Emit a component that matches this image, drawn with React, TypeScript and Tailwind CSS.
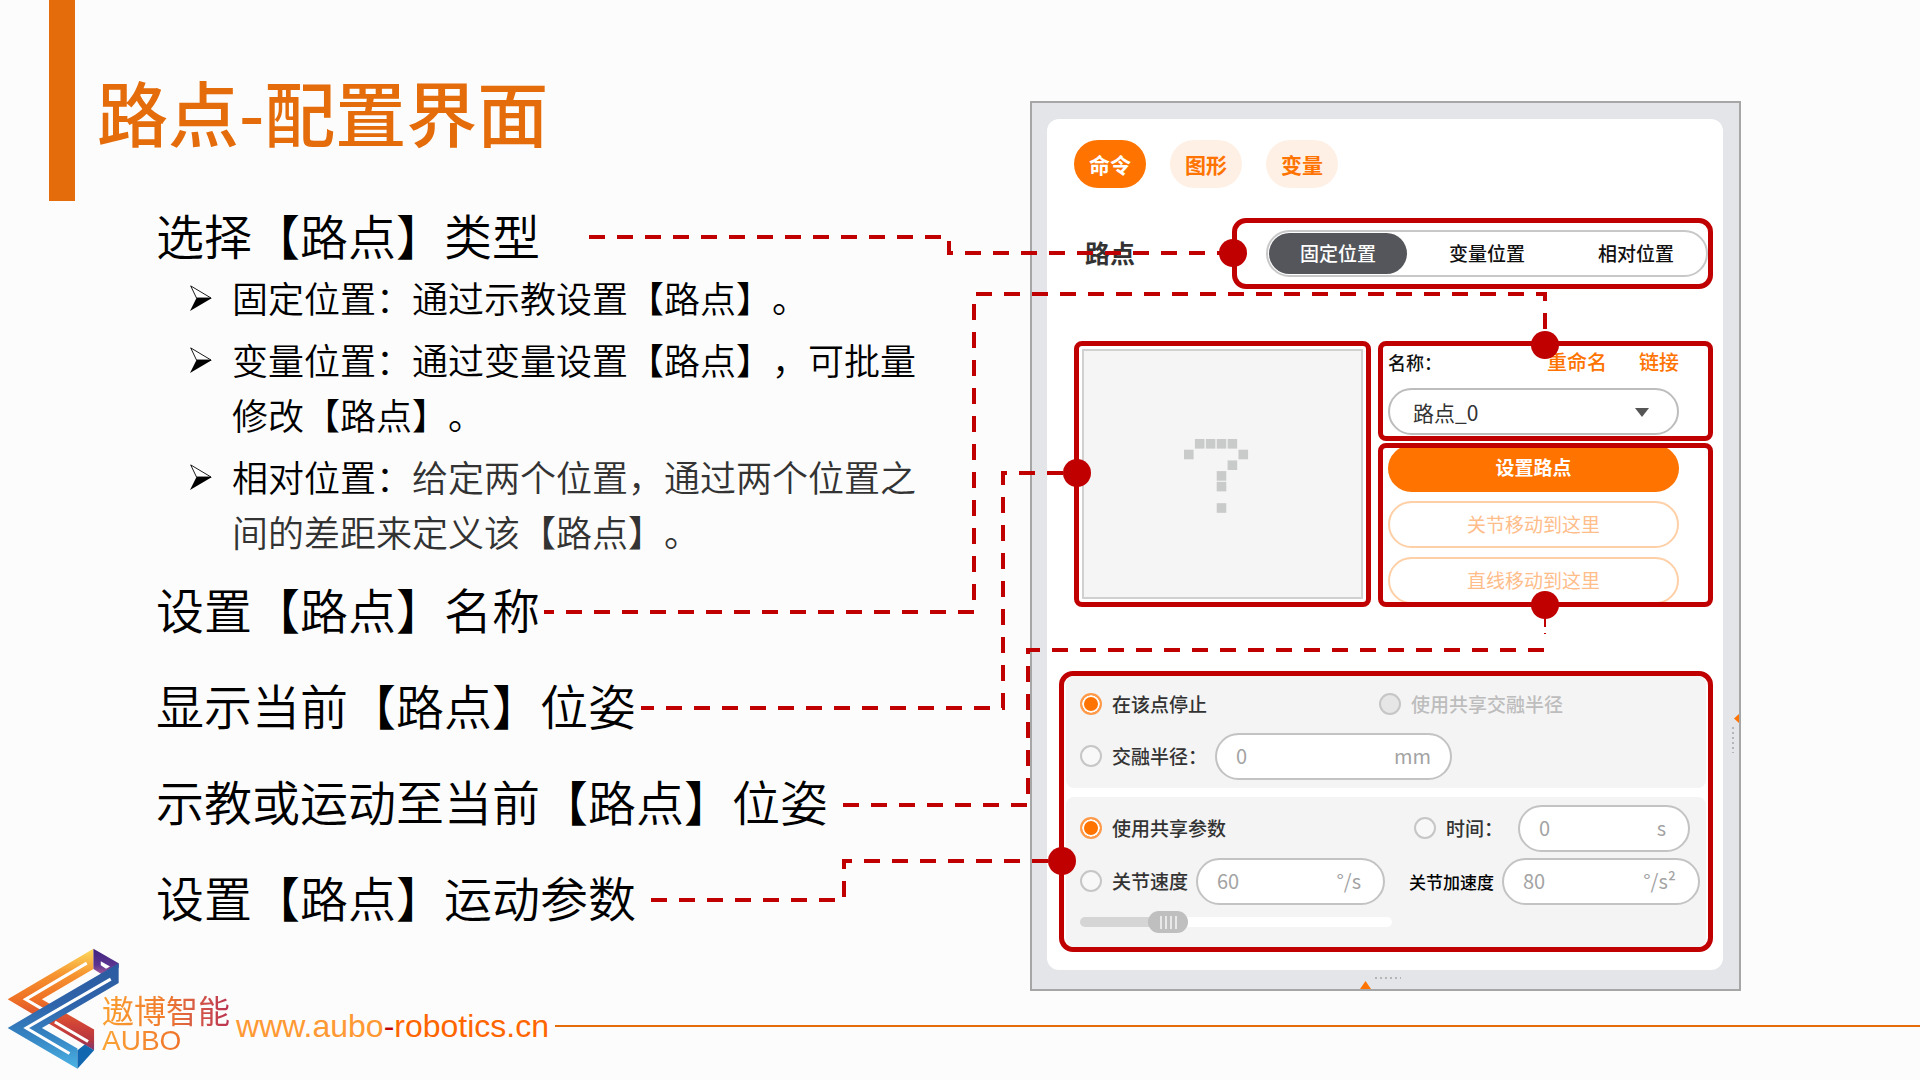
import React, { useState } from "react";

const RED = "#c00000";

function ArrowBullet() {
  return (
    <svg viewBox="0 0 22 26" className="mt-[15px] h-[26px] w-[22px] shrink-0" aria-hidden="true">
      <path d="M0.7 0.9 L21 13 L6.5 13 Z" fill="#fff" stroke="#000" strokeWidth="0.9" />
      <path d="M6.5 13 L22 13 L0 26 Z" fill="#000" />
    </svg>
  );
}

function SubItem({ children }: { children: React.ReactNode }) {
  return (
    <li className="flex gap-5 text-4xl leading-[55px]">
      <ArrowBullet />
      <p className="min-w-0 flex-1">{children}</p>
    </li>
  );
}

function AuboLogo() {
  return (
    <svg viewBox="20 53 340 366" className="h-[122px] w-[113px] shrink-0" aria-hidden="true">
      <defs>
        <linearGradient id="warm" gradientUnits="userSpaceOnUse" x1="270" y1="60" x2="270" y2="360">
          <stop offset="0" stopColor="#fbd65a" />
          <stop offset="0.25" stopColor="#f6922f" />
          <stop offset="0.5" stopColor="#ee6f25" />
          <stop offset="0.75" stopColor="#cf4238" />
          <stop offset="0.9" stopColor="#b5373f" />
          <stop offset="1" stopColor="#7a3a78" />
        </linearGradient>
        <linearGradient id="cool" gradientUnits="userSpaceOnUse" x1="200" y1="100" x2="200" y2="416">
          <stop offset="0" stopColor="#2b5a9f" />
          <stop offset="0.4" stopColor="#3065ab" />
          <stop offset="0.7" stopColor="#3585c3" />
          <stop offset="1" stopColor="#4cb4e4" />
        </linearGradient>
        <linearGradient id="violet" x1="0" y1="0" x2="0" y2="1">
          <stop offset="0" stopColor="#3f2380" />
          <stop offset="0.6" stopColor="#5b3590" />
          <stop offset="1" stopColor="#b0609a" />
        </linearGradient>
      </defs>
      <path d="M280 55 L22 207 L282 360 L282 298 L125 207 L280 116 Z" fill="url(#warm)" />
      <path d="M260 98 L76 207 L160 256" fill="none" stroke="#fff" strokeWidth="9" />
      <path d="M164 275 L264 334" fill="none" stroke="#fff" strokeWidth="9" />
      <path d="M280 55 L356 98 L356 112 L312 136 L280 116 Z" fill="url(#violet)" />
      <path d="M302 92 L330 108 L318 115 L302 104 Z" fill="#fff" />
      <path d="M356 98 L22 293 L232 416 L232 355 L125 293 L356 158 Z" fill="url(#cool)" />
      <path d="M332 146 L78 293 L208 370" fill="none" stroke="#fff" strokeWidth="9" />
      <path d="M232 360 L254 343 L282 360 L232 416 Z" fill="#1268b0" />
    </svg>
  );
}

function Connectors() {
  return (
    <svg
      width="1920"
      height="1080"
      viewBox="0 0 1920 1080"
      className="pointer-events-none absolute top-0 left-0 max-w-none"
      aria-hidden="true"
    >
      <g fill="none" stroke={RED} strokeWidth="4" strokeDasharray="16 12">
        <path d="M589 237 H949 V253 H1232" />
        <path d="M544 612 H974 V294 H1545 V345" strokeDashoffset="6" />
        <path d="M641 708 H1003 V473 H1077" strokeDashoffset="3" />
        <path d="M843 805 H1028 V650 H1545" />
        <path d="M651 900 H844 V861 H1062" />
      </g>
      <path d="M1545 605 V627 M1545 633 V634" stroke={RED} strokeWidth="2" />
      <g fill={RED}>
        <circle cx="1233" cy="253" r="14" />
        <circle cx="1545" cy="345" r="14" />
        <circle cx="1077" cy="473" r="14" />
        <circle cx="1545" cy="605" r="14" />
        <circle cx="1062" cy="861" r="14" />
      </g>
    </svg>
  );
}

const PIXELS = [
  [1, 0], [2, 0], [3, 0], [4, 0],
  [0, 1], [5, 1],
  [4, 2],
  [3, 3],
  [3, 4],
  [3, 6],
];

function QuestionMark() {
  return (
    <svg viewBox="0 0 65 75" className="h-[75px] w-[65px]" aria-label="?">
      {PIXELS.map(([c, r]) => (
        <rect key={c + "-" + r} x={c * 10.9} y={r * 10.7} width="9.6" height="9.6" fill="#c9caca" />
      ))}
    </svg>
  );
}

function Radio({ name, label, defaultChecked, disabled, className = "" }: {
  name: string; label: string; defaultChecked?: boolean; disabled?: boolean; className?: string;
}) {
  return (
    <label className={"flex shrink-0 items-center gap-[10px] font-medium " + (disabled ? "text-[#bdbdbd] " : "text-[#333] ") + className}>
      <input
        type="radio"
        name={name}
        defaultChecked={defaultChecked}
        disabled={disabled}
        className="size-[22px] shrink-0 appearance-none rounded-full border-2 border-[#c6c6c6] bg-[#f8f8f8] checked:border-[#ff9a4a] checked:bg-[#ff7300] checked:shadow-[inset_0_0_0_2px_white] disabled:bg-[#e6e6e6]"
      />
      {label}
    </label>
  );
}

function Field({ label, value, unit, className }: { label: string; value: string; unit: string; className: string }) {
  return (
    <div className={"flex h-[47px] shrink-0 items-center rounded-full border-2 border-[#c3c3c3] bg-white pb-0.5 pl-[19px] text-xl text-[#a3a3a3] " + className}>
      <input type="text" aria-label={label} defaultValue={value} className="w-0 min-w-0 flex-1 bg-transparent outline-none" />
      <span>{unit}</span>
    </div>
  );
}

const TABS = ["命令", "图形", "变量"];
const KINDS = ["固定位置", "变量位置", "相对位置"];

function WaypointPanel() {
  const [tab, setTab] = useState(0);
  const [kind, setKind] = useState(0);
  return (
    <aside className="relative mt-[101px] mr-[179px] min-w-0 flex-1 border-2 border-[#a6a6a6] bg-[#e3e5e8] pt-4 pr-4 pb-[19px] pl-[15px]">
      <div className="rounded-xl bg-white pt-[21px] pr-[10px] pb-[18px] pl-3 text-[19px] leading-6">
        <nav className="flex gap-6 pl-[15px]">
          {TABS.map((t, i) => (
            <button
              key={t}
              onClick={() => setTab(i)}
              className={
                "h-12 w-[72px] rounded-full text-[21px] font-bold " +
                (i === tab ? "bg-[#ff7300] text-white" : "bg-[#fff0e5] text-[#ff7300]")
              }
            >
              {t}
            </button>
          ))}
        </nav>

        <div className="mt-[30px] flex items-center justify-between pl-[26px]">
          <h2 className="pb-1 text-[25px] font-bold text-[#333]">路点</h2>
          <div className="rounded-[14px] border-5 border-[#c00000] py-[7px] pl-[29px]">
            <div className="flex h-[47px] w-[442px] justify-between rounded-full border-2 border-[#c8c8c8] p-px">
              {KINDS.map((k, i) => (
                <button
                  key={k}
                  onClick={() => setKind(i)}
                  className={
                    "w-[138px] rounded-full pb-0.5 font-medium " +
                    (i === kind ? "bg-[#54565b] text-white" : "text-[#111]")
                  }
                >
                  {k}
                </button>
              ))}
            </div>
          </div>
        </div>

        <div className="mt-[52px] flex gap-[7px] pl-[15px]">
          <div className="flex h-[266px] w-[297px] shrink-0 rounded-lg border-5 border-[#c00000] p-[3px]">
            <div className="flex flex-1 items-center justify-center border-2 border-[#d0d0d0] bg-[#f5f5f5] pt-1 pr-3">
              <QuestionMark />
            </div>
          </div>
          <div className="flex min-w-0 flex-1 flex-col gap-[2px]">
            <div className="h-[100px] rounded-lg border-5 border-[#c00000] pr-[29px] pl-[5px]">
              <div className="flex h-[42px] items-center pb-2.5">
                <label htmlFor="waypoint-name" className="mr-auto text-lg font-medium text-[#111]">名称：</label>
                <div className="flex gap-8 text-xl font-medium text-[#ff7300]">
                  <button>重命名</button>
                  <button>链接</button>
                </div>
              </div>
              <div className="relative">
                <select
                  id="waypoint-name"
                  className="h-[47px] w-full appearance-none rounded-full border-2 border-[#bdbdbd] bg-white pl-[23px] text-[21px] leading-8 text-[#333]"
                >
                  <option>路点_0</option>
                </select>
                <svg viewBox="0 0 14 9" className="pointer-events-none absolute top-[20px] right-[30px] h-[9px] w-[14px]" aria-hidden="true">
                  <path d="M0 0 H14 L7 9 Z" fill="#555" />
                </svg>
              </div>
            </div>
            <div className="flex h-[164px] flex-col justify-center gap-[9px] overflow-hidden rounded-lg border-5 border-[#c00000] pr-[29px] pb-0.5 pl-[5px]">
              <button className="h-[47px] shrink-0 rounded-full bg-[#ff7300] pb-0.5 font-bold text-white">设置路点</button>
              <button className="h-[47px] shrink-0 rounded-full border-2 border-[#ffcfa6] text-[#ffbd8a]">关节移动到这里</button>
              <button className="h-[47px] shrink-0 rounded-full border-2 border-[#ffcfa6] text-[#ffbd8a]">直线移动到这里</button>
            </div>
          </div>
        </div>

        <div className="mt-16 flex h-[281px] flex-col gap-[9px] rounded-[14px] border-5 border-[#c00000] px-[2px]">
          <div className="flex flex-col gap-[9px] rounded-lg bg-[#f4f4f4] py-2 pl-[14px]">
            <div className="flex h-10 items-center">
              <Radio name="blend" label="在该点停止" defaultChecked className="w-[299px]" />
              <Radio name="blend" label="使用共享交融半径" disabled />
            </div>
            <div className="flex items-center gap-2">
              <Radio name="blend" label="交融半径：" className="pb-0.5" />
              <Field label="交融半径" value="0" unit="mm" className="w-[237px] pr-[19px]" />
            </div>
          </div>
          <div className="flex flex-1 flex-col gap-[6px] rounded-lg bg-[#f4f4f4] pt-2 pl-[14px]">
            <div className="flex items-center">
              <Radio name="motion" label="使用共享参数" defaultChecked className="w-[334px] pb-0.5" />
              <Radio name="motion" label="时间：" className="mr-[15px] pb-0.5" />
              <Field label="时间" value="0" unit="s" className="w-[172px] pr-[22px]" />
            </div>
            <div className="flex items-center">
              <Radio name="motion" label="关节速度" className="mr-2 pb-0.5" />
              <Field label="关节速度" value="60" unit="°/s" className="w-[189px] pr-[22px]" />
              <span className="mr-2 ml-6 shrink-0 text-[17px] font-medium text-black">关节加速度</span>
              <Field label="关节加速度" value="80" unit="°/s²" className="w-[198px] pr-[22px]" />
            </div>
            <input
              type="range"
              aria-label="关节速度"
              defaultValue={25}
              className="h-[22px] w-[312px] appearance-none bg-transparent [&::-webkit-slider-runnable-track]:h-[10px] [&::-webkit-slider-runnable-track]:rounded-full [&::-webkit-slider-runnable-track]:bg-[linear-gradient(to_right,#d5d5d5_28%,#ffffff_28%)] [&::-webkit-slider-thumb]:mt-[-6px] [&::-webkit-slider-thumb]:h-[22px] [&::-webkit-slider-thumb]:w-[40px] [&::-webkit-slider-thumb]:appearance-none [&::-webkit-slider-thumb]:rounded-full [&::-webkit-slider-thumb]:bg-[#bfbfbf] [&::-webkit-slider-thumb]:bg-[repeating-linear-gradient(to_right,#e8e8e8_0_2px,transparent_2px_5px)] [&::-webkit-slider-thumb]:bg-[length:17px_13px] [&::-webkit-slider-thumb]:bg-center [&::-webkit-slider-thumb]:bg-no-repeat"
            />
          </div>
        </div>
      </div>

      <svg viewBox="0 0 42 14" className="absolute right-[337px] bottom-0 h-[14px] w-[42px]" aria-hidden="true">
        <path d="M0 14 L5.5 6 L11 14 Z" fill="#ff7300" />
        <path d="M15 3 H41" stroke="#b5b5b5" strokeWidth="2" strokeDasharray="2 3" />
      </svg>
      <svg viewBox="0 0 8 40" className="absolute right-0 bottom-[235px] h-[40px] w-[8px]" aria-hidden="true">
        <path d="M8 0 L3 4.5 L8 9 Z" fill="#ff7300" />
        <path d="M2 13 V39" stroke="#b5b5b5" strokeWidth="2" strokeDasharray="2 3" />
      </svg>
    </aside>
  );
}

export default function App() {
  return (
    <div className="relative min-h-screen overflow-hidden bg-[#fcfcfc] font-['Noto_Sans_CJK_SC',sans-serif] text-black [text-spacing-trim:space-all]">
      <div className="flex">
        <section className="w-[1030px] shrink-0">
          <header className="flex h-[198px] items-start gap-[22px] pl-[49px]">
            <div className="h-[201px] w-[26px] shrink-0 bg-[#e46c0a]" />
            <h1 className="pt-[60px] text-[71px] leading-[100px] font-medium text-[#e46c0a]">路点-配置界面</h1>
          </header>
          <div className="w-[922px] pl-[156px] text-5xl leading-[72px] font-[350]">
            <p>选择【路点】类型</p>
            <ul className="flex flex-col gap-[7px] pl-[34px]">
              <SubItem>固定位置：通过示教设置【路点】。</SubItem>
              <SubItem>变量位置：通过变量设置【路点】，可批量修改【路点】。</SubItem>
              <SubItem>
                相对位置：
                <span className="text-[#333]">给定两个位置，通过两个位置之间的差距来定义该【路点】。</span>
              </SubItem>
            </ul>
            <div className="mt-[13px] flex flex-col gap-6">
              <p>设置【路点】名称</p>
              <p>显示当前【路点】位姿</p>
              <p>示教或运动至当前【路点】位姿</p>
              <p>设置【路点】运动参数</p>
            </div>
          </div>
        </section>
        <WaypointPanel />
      </div>

      <footer className="-mt-[43px] flex h-[132px] pl-[7px]">
        <AuboLogo />
        <div className="-ml-[18px] shrink-0 pt-[43px]">
          <p className="bg-gradient-to-r from-[#fba02f] via-[#f07a2c] to-[#b93050] bg-clip-text text-[32px] leading-[36px] font-normal text-transparent">
            遨博智能
          </p>
          <p className="w-[84px] bg-gradient-to-r from-[#fba535] to-[#ee6f2a] bg-clip-text font-['Liberation_Sans',sans-serif] text-[28px] leading-[28px] text-transparent">
            AUBO
          </p>
        </div>
        <a
          href="http://www.aubo-robotics.cn"
          className="ml-[6px] pt-[60px] font-['Liberation_Sans',sans-serif] text-[32px] leading-9 text-[#ff6600]"
        >
          <span className="text-[#ff9933]">www.aubo</span>
          <span className="text-[#c00000]">-</span>robotics.cn
        </a>
        <div className="mt-[77px] ml-[6px] h-[2px] flex-1 bg-[#e46c0a]" />
      </footer>

      <Connectors />
    </div>
  );
}
